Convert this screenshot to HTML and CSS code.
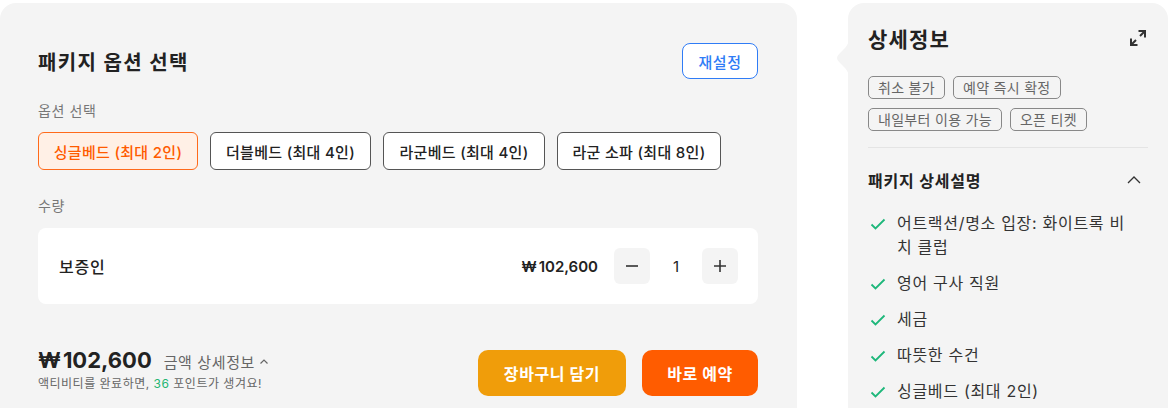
FILE: index.html
```html
<!DOCTYPE html>
<html lang="ko">
<head>
<meta charset="utf-8">
<link rel="stylesheet" href="styles.css">
</head>
<body>
<div class="page">
  <section class="options">
    <div class="opt-header">
      <h2 class="opt-title">패키지 옵션 선택</h2>
      <button class="reset">재설정</button>
    </div>
    <div class="label lbl-opt">옵션 선택</div>
    <div class="chips">
      <button class="chip selected">싱글베드 (최대 2인)</button>
      <button class="chip">더블베드 (최대 4인)</button>
      <button class="chip">라군베드 (최대 4인)</button>
      <button class="chip">라군 소파 (최대 8인)</button>
    </div>
    <div class="label lbl-qty">수량</div>
    <div class="qty-card">
      <span class="qty-name">보증인</span>
      <span class="qty-price"><span class="won">₩</span>102,600</span>
      <div class="stepper">
        <button class="step"><svg width="16" height="16" viewBox="0 0 16 16"><path d="M2 8h12" stroke="#333" stroke-width="1.6"/></svg></button>
        <span class="qty-num">1</span>
        <button class="step"><svg width="16" height="16" viewBox="0 0 16 16"><path d="M2 8h12M8 2v12" stroke="#333" stroke-width="1.6"/></svg></button>
      </div>
    </div>
    <div class="footer">
      <div class="total">
        <div class="total-line">
          <span class="total-price"><span class="won">₩</span>102,600</span>
          <span class="detail-link">금액 상세정보 <svg width="10" height="10" viewBox="0 0 10 10"><path d="M1.5 6.5L5 3l3.5 3.5" fill="none" stroke="#666" stroke-width="1.2"/></svg></span>
        </div>
        <div class="points">액티비티를 완료하면, <span class="pt">36</span> 포인트가 생겨요!</div>
      </div>
      <div class="actions">
        <button class="btn cart">장바구니 담기</button>
        <button class="btn book">바로 예약</button>
      </div>
    </div>
  </section>

  <aside class="info">
    <svg class="notch" width="12" height="38" viewBox="0 0 12 38"><path d="M12 0C12 9 0 14 0 19C0 24 12 29 12 38Z" fill="#f4f4f4"/></svg>
    <div class="info-header">
      <h2 class="info-title">상세정보</h2>
      <svg class="expand" width="20" height="20" viewBox="0 0 20 20"><path d="M3.5 16.5L8 12M12 8L16.5 3.5M10.5 3h6.5v6.5M3 10.5V17h6.5" fill="none" stroke="#333" stroke-width="2"/></svg>
    </div>
    <div class="tags">
      <span class="tag">취소 불가</span>
      <span class="tag">예약 즉시 확정</span>
      <span class="tag">내일부터 이용 가능</span>
      <span class="tag">오픈 티켓</span>
    </div>
    <div class="divider"></div>
    <div class="sub-header">
      <h3 class="sub-title">패키지 상세설명</h3>
      <svg width="16" height="16" viewBox="0 0 16 16"><path d="M2 11l6-6 6 6" fill="none" stroke="#333" stroke-width="1.3"/></svg>
    </div>
    <ul class="checks">
      <li><svg class="ck" width="18" height="18" viewBox="0 0 18 18"><path d="M2.5 9.5l4 4L15.5 4.5" fill="none" stroke="#1db77a" stroke-width="1.8"/></svg><span>어트랙션/명소 입장: 화이트록 비치 클럽</span></li>
      <li><svg class="ck" width="18" height="18" viewBox="0 0 18 18"><path d="M2.5 9.5l4 4L15.5 4.5" fill="none" stroke="#1db77a" stroke-width="1.8"/></svg><span>영어 구사 직원</span></li>
      <li><svg class="ck" width="18" height="18" viewBox="0 0 18 18"><path d="M2.5 9.5l4 4L15.5 4.5" fill="none" stroke="#1db77a" stroke-width="1.8"/></svg><span>세금</span></li>
      <li><svg class="ck" width="18" height="18" viewBox="0 0 18 18"><path d="M2.5 9.5l4 4L15.5 4.5" fill="none" stroke="#1db77a" stroke-width="1.8"/></svg><span>따뜻한 수건</span></li>
      <li><svg class="ck" width="18" height="18" viewBox="0 0 18 18"><path d="M2.5 9.5l4 4L15.5 4.5" fill="none" stroke="#1db77a" stroke-width="1.8"/></svg><span>싱글베드 (최대 2인)</span></li>
    </ul>
  </aside>
</div>
</body>
</html>
```
FILE: styles.css
```css
* { box-sizing: border-box; }
html, body { margin: 0; padding: 0; background: #fff; }
body {
  font-family: "Inter", "Noto Sans CJK KR", sans-serif;
  color: #222;
  overflow: hidden;
}
button { font-family: inherit; cursor: pointer; }
h2, h3 { margin: 0; }

.page {
  display: flex;
  align-items: flex-start;
  gap: 51px;
  padding-top: 3px;
}

.options {
  width: 797px;
  height: 420px;
  background: #f4f4f4;
  border-radius: 16px;
  padding: 40px 39px 0 38px;
}
.opt-header {
  display: flex;
  justify-content: space-between;
  align-items: center;
  height: 36px;
}
.opt-title { font-size: 20px; font-weight: 700; color: #222; letter-spacing: 1.4px; }
.reset {
  width: 76px; height: 36px;
  border: 1px solid #2f7cf6;
  border-radius: 8px;
  background: #fff;
  color: #2f7cf6;
  font-size: 15px;
  font-weight: 500;
  letter-spacing: 0.6px;
}
.label { font-size: 14px; line-height: 20px; color: #777; letter-spacing: 0.6px; }
.lbl-opt { margin-top: 22px; }
.chips { display: flex; gap: 12px; margin-top: 11px; }
.chip {
  height: 38px;
  padding: 0;
  white-space: nowrap;
  border: 1px solid #555;
  border-radius: 6px;
  background: #fff;
  color: #222;
  font-size: 15px;
  font-weight: 500;
  letter-spacing: 0.3px;
}
.chip:nth-child(1) { width: 160px; }
.chip:nth-child(2) { width: 161px; }
.chip:nth-child(3) { width: 162px; }
.chip:nth-child(4) { width: 164px; }
.chip.selected { border-color: #ff6a1a; background: #fff0e6; color: #ff5b00; }
.lbl-qty { margin-top: 26px; }
.qty-card {
  margin-top: 12px;
  height: 76px;
  background: #fff;
  border-radius: 8px;
  display: flex;
  align-items: center;
  padding: 0 20px 0 21px;
}
.qty-name { font-size: 16px; font-weight: 500; flex: 1; letter-spacing: 0.8px; }
.qty-price { font-size: 15px; font-weight: 600; margin-right: 16px; }
.won { margin-right: 2px; }
.stepper { display: flex; align-items: center; }
.step {
  width: 36px; height: 36px;
  border: none; border-radius: 6px;
  background: #f4f4f4;
  display: flex; align-items: center; justify-content: center;
  padding: 0;
}
.qty-num { width: 52px; text-align: center; font-size: 15px; }

.footer {
  margin-top: 46px;
  display: flex;
  justify-content: space-between;
  align-items: flex-start;
}
.total-line { display: flex; align-items: baseline; gap: 12px; margin-top: -3px; }
.total-price { font-size: 22px; font-weight: 700; color: #222; letter-spacing: 0; }
.detail-link { font-size: 15px; color: #666; display: inline-flex; align-items: center; gap: 4px; letter-spacing: 0.6px; }
.points { font-size: 12px; color: #666; margin-top: 1px; letter-spacing: 0.5px; }
.pt { color: #22b573; }
.actions { display: flex; gap: 16px; }
.btn {
  height: 46px;
  border: none;
  border-radius: 10px;
  color: #fff;
  font-size: 16px;
  font-weight: 700;
  letter-spacing: 0.6px;
}
.cart { width: 148px; background: #f09d0a; }
.book { width: 116px; background: #ff5c00; }

.info {
  position: relative;
  width: 320px;
  height: 420px;
  background: #f4f4f4;
  border-radius: 16px;
  padding: 20px 20px 0 20px;
}
.notch { position: absolute; left: -11px; top: 36px; }
.info-header { display: flex; justify-content: space-between; align-items: center; height: 30px; }
.info-title { font-size: 21px; font-weight: 700; color: #222; letter-spacing: 1.2px; }
.expand { margin-right: 0; }
.tags { display: flex; flex-wrap: wrap; gap: 9px 8px; margin-top: 23px; width: 250px; }
.tag {
  height: 23px;
  padding: 0 9px;
  border: 1px solid #888;
  border-radius: 5px;
  font-size: 14px;
  line-height: 21px;
  color: #666;
  letter-spacing: 0.3px;
}
.divider { height: 1px; background: #e4e4e4; margin-top: 16px; }
.sub-header { display: flex; justify-content: space-between; align-items: center; height: 24px; margin-top: 20px; padding-right: 6px; }
.sub-title { font-size: 16px; font-weight: 700; color: #222; letter-spacing: 0.8px; }
.checks { list-style: none; margin: 19px 0 0; padding: 0; display: flex; flex-direction: column; gap: 12px; }
.checks li { display: flex; align-items: flex-start; gap: 10px; font-size: 16px; line-height: 24px; color: #333; letter-spacing: 0.7px; }
.ck { flex: none; margin-top: 4px; margin-left: 1px; }
.checks li span { width: 240px; word-break: break-all; }
```
